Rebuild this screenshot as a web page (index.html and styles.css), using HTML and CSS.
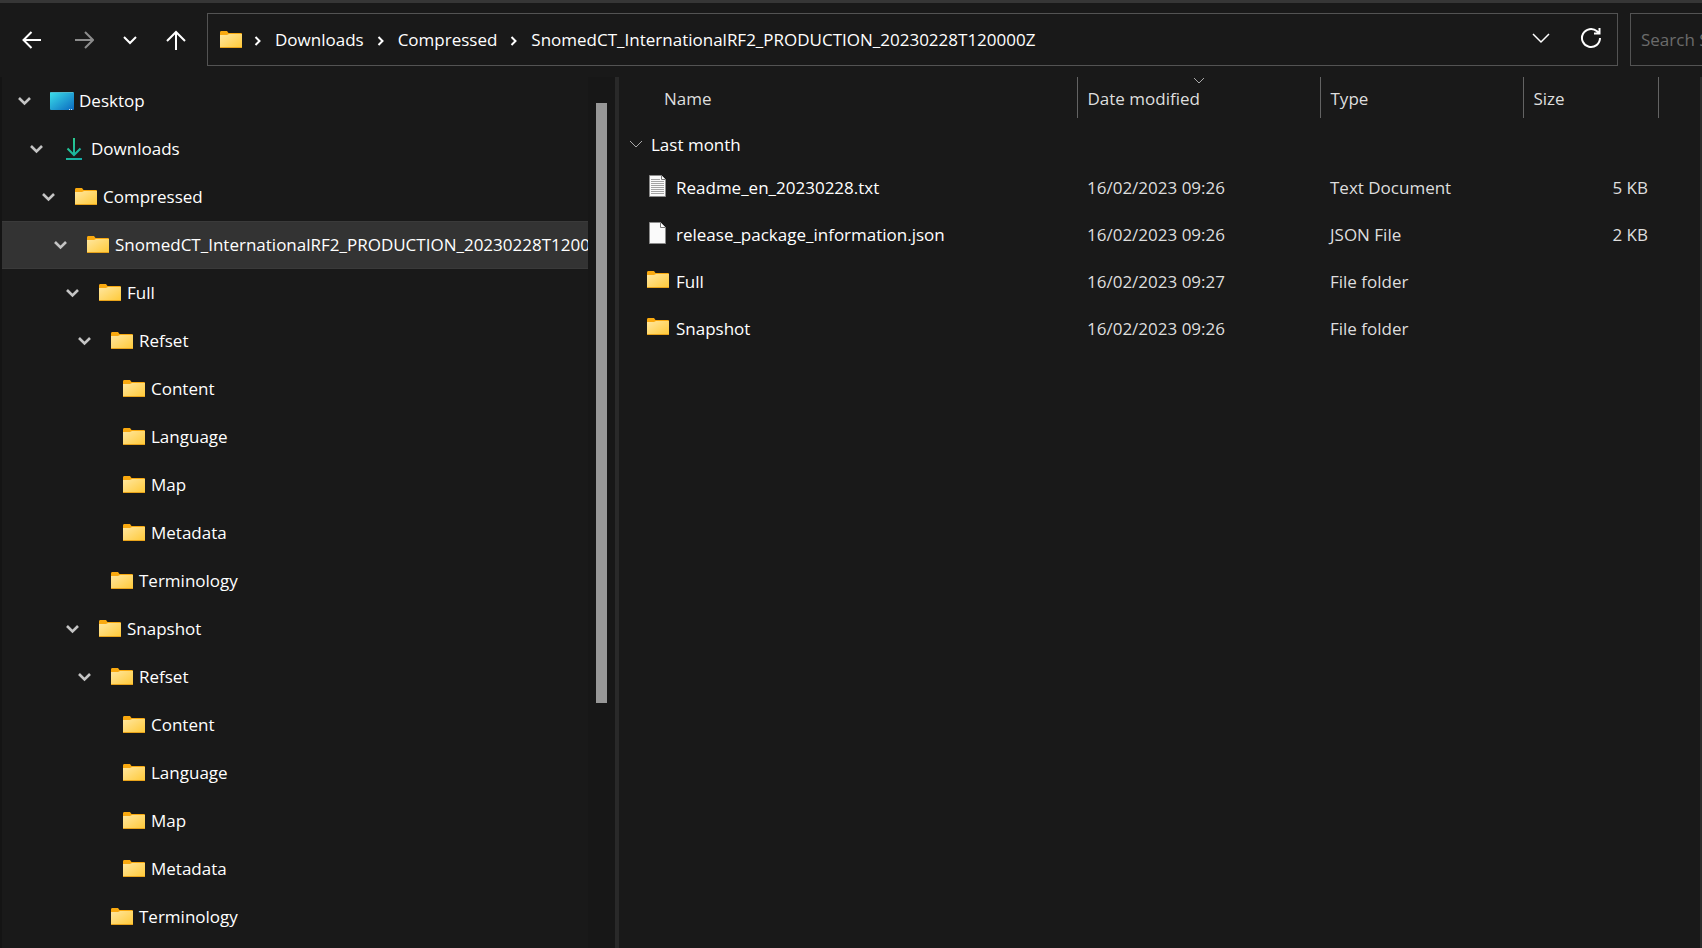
FILE: index.html
```html
<!DOCTYPE html>
<html lang="en">
<head>
    <meta charset="UTF-8">
    <meta name="viewport" content="width=device-width, initial-scale=1.0">
    <title>File Explorer</title>
    <link rel="stylesheet" href="styles.css">
</head>
<body>
    <!-- Shared icons -->
    <svg class="sprite" aria-hidden="true">
        <defs>
            <linearGradient id="folderFill" x1="0" y1="0" x2="1" y2="1">
                <stop offset="0" stop-color="#ffe7a0"/>
                <stop offset="1" stop-color="#ffc937"/>
            </linearGradient>
            <linearGradient id="desktopFill" x1="0" y1="0" x2="1" y2="1">
                <stop offset="0" stop-color="#3be0ea"/>
                <stop offset="1" stop-color="#0b69c0"/>
            </linearGradient>
            <linearGradient id="downloadFill" gradientUnits="userSpaceOnUse" x1="4" y1="1" x2="20" y2="23">
                <stop offset="0" stop-color="#2fd08b"/>
                <stop offset="1" stop-color="#12a8a8"/>
            </linearGradient>
        </defs>
        <symbol id="folder" viewBox="0 0 24 24">
            <path d="M1 4.500Q1 3 2 3h6l1.500 2H22q1 0 1 1v4H1z" fill="#f9a90f"/>
            <path d="M1 7h7L10 6h13v14H1z" fill="url(#folderFill)"/>
            <path d="M1 19.500h22" stroke="#e8a31b" stroke-width="1"/>
        </symbol>
        <symbol id="desktop" viewBox="0 0 24 24">
            <rect x="0" y="3" width="24" height="18" rx="1" fill="url(#desktopFill)"/>
            <path d="M1 3.500h22" stroke="#4fb9cf" stroke-width="1"/>
            <path d="M19 20.500h1M21 20.500h1" stroke="#c8e4f6" stroke-width="1"/>
        </symbol>
        <symbol id="download" viewBox="0 0 24 24">
            <path d="M12 1v17M5.500 11.500l6.500 6.500 6.500-6.500M4 22h16" fill="none" stroke="url(#downloadFill)" stroke-width="2"/>
        </symbol>
        <symbol id="text-file" viewBox="0 0 24 24">
            <path d="M3.500 1.500h12l4 4v17h-16z" fill="#fafafa" stroke="#8b8b8b" stroke-width="1"/>
            <path d="M15.500 1.500v4h4" fill="#fff" stroke="#777" stroke-width="1"/>
            <path d="M5 5.500h9M5 7.500h13M5 9.500h13M5 11.500h13M5 13.500h13M5 15.500h13M5 17.500h13M5 19.500h13" stroke="#a3a3a3" stroke-width="1"/>
        </symbol>
        <symbol id="blank-file" viewBox="0 0 24 24">
            <path d="M3.500 1.500h11l5 5v16h-16z" fill="#fafafa" stroke="#8b8b8b" stroke-width="1"/>
            <path d="M14.500 1.500v5h5" fill="#fff" stroke="#777" stroke-width="1"/>
        </symbol>
        <symbol id="expand" viewBox="0 0 14 14">
            <path d="M1 4l5.500 5.500L12 4" fill="none" stroke="currentColor" stroke-width="2.600"/>
        </symbol>
        <symbol id="crumb" viewBox="0 0 8 10">
            <path d="M1.500 1l4 4-4 4" fill="none" stroke="currentColor" stroke-width="2"/>
        </symbol>
    </svg>

    <header class="toolbar">
        <nav class="history">
            <button type="button" aria-label="Back">
                <svg width="20" height="20" viewBox="0 0 20 20"><path d="M19 10H1.500M9.500 2l-8 8 8 8"/></svg>
            </button>
            <button type="button" class="muted" aria-label="Forward">
                <svg width="20" height="20" viewBox="0 0 20 20"><path d="M1 10h18M11 2l8 8-8 8"/></svg>
            </button>
            <button type="button" class="recent" aria-label="Recent locations">
                <svg width="14" height="20" viewBox="0 0 14 20"><path d="M1 7l6 6 6-6"/></svg>
            </button>
            <button type="button" aria-label="Up">
                <svg width="20" height="20" viewBox="0 0 20 20"><path d="M10 20V2M1 11l9-9 9 9"/></svg>
            </button>
        </nav>
        <div class="address">
            <svg class="icon"><use href="#folder"/></svg>
            <svg class="crumb"><use href="#crumb"/></svg>
            <a href="#">Downloads</a>
            <svg class="crumb"><use href="#crumb"/></svg>
            <a href="#">Compressed</a>
            <svg class="crumb"><use href="#crumb"/></svg>
            <a href="#">SnomedCT_InternationalRF2_PRODUCTION_20230228T120000Z</a>
            <button type="button" class="previous" aria-label="Previous locations">
                <svg width="18" height="20" viewBox="0 0 18 20"><path d="M1 6l8 8 8-8"/></svg>
            </button>
            <button type="button" class="refresh" aria-label="Refresh">
                <svg width="22" height="22" viewBox="0 0 22 22"><path d="M20 11a9 9 0 1 1-3-6.700l2.500 2.200M19.500 1v5.500H14"/></svg>
            </button>
        </div>
        <input class="search" type="text" placeholder="Search SnomedCT" aria-label="Search">
    </header>

    <main class="panes">
        <nav class="sidebar">
            <ul class="tree">
                <li class="level-0"><button type="button" aria-label="Collapse"><svg><use href="#expand"/></svg></button><a href="#"><svg class="icon"><use href="#desktop"/></svg>Desktop</a></li>
                <li class="level-1"><button type="button" aria-label="Collapse"><svg><use href="#expand"/></svg></button><a href="#"><svg class="icon"><use href="#download"/></svg>Downloads</a></li>
                <li class="level-2"><button type="button" aria-label="Collapse"><svg><use href="#expand"/></svg></button><a href="#"><svg class="icon"><use href="#folder"/></svg>Compressed</a></li>
                <li class="level-3 selected"><button type="button" aria-label="Collapse"><svg><use href="#expand"/></svg></button><a href="#"><svg class="icon"><use href="#folder"/></svg>SnomedCT_InternationalRF2_PRODUCTION_20230228T120000Z</a></li>
                <li class="level-4"><button type="button" aria-label="Collapse"><svg><use href="#expand"/></svg></button><a href="#"><svg class="icon"><use href="#folder"/></svg>Full</a></li>
                <li class="level-5"><button type="button" aria-label="Collapse"><svg><use href="#expand"/></svg></button><a href="#"><svg class="icon"><use href="#folder"/></svg>Refset</a></li>
                <li class="level-6 leaf"><a href="#"><svg class="icon"><use href="#folder"/></svg>Content</a></li>
                <li class="level-6 leaf"><a href="#"><svg class="icon"><use href="#folder"/></svg>Language</a></li>
                <li class="level-6 leaf"><a href="#"><svg class="icon"><use href="#folder"/></svg>Map</a></li>
                <li class="level-6 leaf"><a href="#"><svg class="icon"><use href="#folder"/></svg>Metadata</a></li>
                <li class="level-5 leaf"><a href="#"><svg class="icon"><use href="#folder"/></svg>Terminology</a></li>
                <li class="level-4"><button type="button" aria-label="Collapse"><svg><use href="#expand"/></svg></button><a href="#"><svg class="icon"><use href="#folder"/></svg>Snapshot</a></li>
                <li class="level-5"><button type="button" aria-label="Collapse"><svg><use href="#expand"/></svg></button><a href="#"><svg class="icon"><use href="#folder"/></svg>Refset</a></li>
                <li class="level-6 leaf"><a href="#"><svg class="icon"><use href="#folder"/></svg>Content</a></li>
                <li class="level-6 leaf"><a href="#"><svg class="icon"><use href="#folder"/></svg>Language</a></li>
                <li class="level-6 leaf"><a href="#"><svg class="icon"><use href="#folder"/></svg>Map</a></li>
                <li class="level-6 leaf"><a href="#"><svg class="icon"><use href="#folder"/></svg>Metadata</a></li>
                <li class="level-5 leaf"><a href="#"><svg class="icon"><use href="#folder"/></svg>Terminology</a></li>
            </ul>
            <div class="scrollbar"><div class="thumb"></div></div>
        </nav>

        <section class="files">
            <table>
                <colgroup>
                    <col>
                    <col class="col-date">
                    <col class="col-type">
                    <col class="col-size">
                    <col class="col-end">
                </colgroup>
                <thead>
                    <tr>
                        <th class="name">Name</th>
                        <th class="sorted">
                            <svg class="sort" width="12" height="8" viewBox="0 0 12 8"><path d="M1 1l5 5 5-5"/></svg>
                            Date modified
                        </th>
                        <th>Type</th>
                        <th>Size</th>
                        <th></th>
                    </tr>
                </thead>
                <tbody>
                    <tr class="group">
                        <td colspan="5">
                            <button type="button"><svg width="14" height="14" viewBox="0 0 14 14"><path d="M1 3l6 6 6-6"/></svg>Last month</button>
                        </td>
                    </tr>
                    <tr>
                        <td><a href="#"><svg class="icon"><use href="#text-file"/></svg>Readme_en_20230228.txt</a></td>
                        <td>16/02/2023 09:26</td>
                        <td>Text Document</td>
                        <td class="size">5 KB</td>
                        <td></td>
                    </tr>
                    <tr>
                        <td><a href="#"><svg class="icon"><use href="#blank-file"/></svg>release_package_information.json</a></td>
                        <td>16/02/2023 09:26</td>
                        <td>JSON File</td>
                        <td class="size">2 KB</td>
                        <td></td>
                    </tr>
                    <tr>
                        <td><a href="#"><svg class="icon"><use href="#folder"/></svg>Full</a></td>
                        <td>16/02/2023 09:27</td>
                        <td>File folder</td>
                        <td class="size"></td>
                        <td></td>
                    </tr>
                    <tr>
                        <td><a href="#"><svg class="icon"><use href="#folder"/></svg>Snapshot</a></td>
                        <td>16/02/2023 09:26</td>
                        <td>File folder</td>
                        <td class="size"></td>
                        <td></td>
                    </tr>
                </tbody>
            </table>
        </section>
    </main>
</body>
</html>
```

FILE: styles.css
```css
* {
    box-sizing: border-box;
}
body {
    display: flex;
    flex-direction: column;
    min-height: 100vh;
    margin: 0;
    border-top: 3px solid #363636;
    background-color: #191919;
    color: #fff;
    font-family: "Open Sans", "Noto Sans", sans-serif;
    font-size: 17px;
    line-height: 24px;
}
a {
    color: inherit;
    text-decoration: none;
    white-space: nowrap;
}
button {
    display: flex;
    align-items: center;
    padding: 0;
    border: none;
    background: none;
    color: inherit;
    font: inherit;
    cursor: pointer;
}
svg {
    flex-shrink: 0;
    fill: none;
    stroke-width: 2;
}
button svg {
    stroke: currentColor;
}
.sprite {
    position: absolute;
    width: 0;
    height: 0;
}
.icon {
    width: 24px;
    height: 24px;
}

/* Toolbar */
.toolbar {
    display: flex;
    gap: 12px;
    padding: 10px 0 11px 22px;
}
.history {
    display: flex;
    align-items: center;
    gap: 32px;
    width: 173px;
}
.history .recent {
    margin: 0 -3px;
}
.history .muted {
    color: #8c8c8c;
}
.address {
    display: flex;
    flex: 1;
    align-items: center;
    min-width: 0;
    height: 53px;
    padding: 0 15px 0 11px;
    border: 1px solid #535353;
    overflow: hidden;
}
.address .icon {
    margin-right: -2px;
}
.crumb {
    width: 8px;
    height: 10px;
    margin: 2px 13px 0;
}
.address button {
    padding-bottom: 4px;
}
.address .previous {
    margin: 0 30px 0 auto;
}
.previous svg {
    stroke-width: 1.5;
}
.search {
    width: 72px;
    height: 53px;
    padding: 0 0 0 10px;
    border: 1px solid #535353;
    border-right: none;
    background: none;
    color: #fff;
    font: inherit;
}
.search::placeholder {
    color: #6b6b6b;
}

/* Folder tree */
.panes {
    display: flex;
    flex: 1;
}
.sidebar {
    display: flex;
    flex: 0 0 619px;
    min-width: 0;
    max-width: 619px;
    border-left: 2px solid #141414;
    border-right: 4px solid #292929;
}
.tree {
    flex: 1;
    min-width: 0;
    margin: 0;
    padding: 0;
    list-style: none;
}
.tree li {
    display: flex;
    align-items: center;
    height: 48px;
    overflow: hidden;
}
.tree li.selected {
    border: 1px solid #3a3a3a;
    border-width: 1px 0;
    background-color: #333;
}
.tree button {
    color: #c4c4c4;
}
.tree button svg {
    width: 14px;
    height: 14px;
}
.tree a {
    display: flex;
    align-items: center;
    gap: 5px;
    margin-left: 18px;
}
.tree .leaf a {
    margin-left: 32px;
}
.level-0 { padding-left: 16px; }
.level-1 { padding-left: 28px; }
.level-2 { padding-left: 40px; }
.level-3 { padding-left: 52px; }
.level-4 { padding-left: 64px; }
.level-5 { padding-left: 76px; }
.level-6 { padding-left: 88px; }
.scrollbar {
    width: 27px;
    padding: 26px 8px 0;
    background-color: #171717;
}
.thumb {
    width: 11px;
    height: 71%;
    background-color: #979797;
}

/* File list */
.files {
    flex: 1;
    min-width: 0;
    border-right: 2px solid #2b2b2b;
}
table {
    width: 100%;
    border-collapse: collapse;
    table-layout: fixed;
}
.col-date { width: 243px; }
.col-type { width: 203px; }
.col-size { width: 135px; }
.col-end { width: 42px; }
th {
    position: relative;
    height: 41px;
    padding: 2px 0 0 10px;
    border-left: 1px solid #636363;
    color: #dedede;
    font-weight: normal;
    text-align: left;
}
th.name {
    padding-left: 45px;
    border-left: none;
}
.sort {
    position: absolute;
    top: 0;
    left: 50%;
    margin-left: -6px;
    stroke: #a8a8a8;
    stroke-width: 1;
}
td {
    height: 47px;
    padding: 0 10px;
    color: #dedede;
}
td:first-child {
    padding-left: 27px;
    color: #fff;
}
td a {
    display: flex;
    align-items: center;
    gap: 6px;
}
td .icon {
    margin: -2px 0 2px;
}
td.size {
    text-align: right;
}
.group td {
    height: 46px;
    padding: 8px 0 0;
}
.group td:first-child {
    padding-left: 10px;
}
.group button {
    gap: 8px;
}
.group svg {
    stroke: #a8a8a8;
    stroke-width: 1;
}
```
